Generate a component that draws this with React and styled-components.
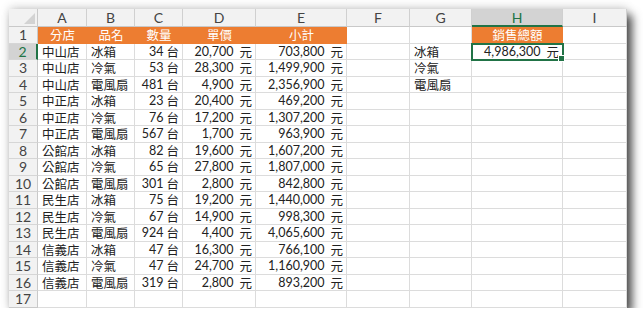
import React from 'react';
import styled, { createGlobalStyle } from 'styled-components';

const GlobalStyle = createGlobalStyle`
    html, body{
        margin: 0;
        padding: 0;
        background: #fff;
    }
    body{
        font-family: Lato, "Noto Sans CJK TC", sans-serif;
    }
`

const GREEN = '#217346';
const ORANGE = '#ED7D31';

const columns = [
    { key: 'A', width: 49 },
    { key: 'B', width: 48 },
    { key: 'C', width: 48 },
    { key: 'D', width: 73 },
    { key: 'E', width: 91 },
    { key: 'F', width: 63 },
    { key: 'G', width: 62 },
    { key: 'H', width: 91 },
    { key: 'I', width: 64 },
];

const sales = [
    ['中山店', '冰箱', 34, 20700, 703800],
    ['中山店', '冷氣', 53, 28300, 1499900],
    ['中山店', '電風扇', 481, 4900, 2356900],
    ['中正店', '冰箱', 23, 20400, 469200],
    ['中正店', '冷氣', 76, 17200, 1307200],
    ['中正店', '電風扇', 567, 1700, 963900],
    ['公館店', '冰箱', 82, 19600, 1607200],
    ['公館店', '冷氣', 65, 27800, 1807000],
    ['公館店', '電風扇', 301, 2800, 842800],
    ['民生店', '冰箱', 75, 19200, 1440000],
    ['民生店', '冷氣', 67, 14900, 998300],
    ['民生店', '電風扇', 924, 4400, 4065600],
    ['信義店', '冰箱', 47, 16300, 766100],
    ['信義店', '冷氣', 47, 24700, 1160900],
    ['信義店', '電風扇', 319, 2800, 893200],
];

const lookup = ['冰箱', '冷氣', '電風扇'];

const fmt = (n) => n.toLocaleString('en-US');

function Unit({ value, unit, wide }) {
    return (
        <>
            <span>{fmt(value)}</span>
            <UnitMark wide={wide}>{unit}</UnitMark>
        </>
    )
}

function App() {
    const header = ['分店', '品名', '數量', '單價', '小計'];

    const rows = [];
    // row 1 - titles
    rows.push(
        <React.Fragment key="r1">
            <RowHead>1</RowHead>
            {header.map((h) => <Cell key={h} fill="orange" align="center">{h}</Cell>)}
            <Cell />
            <Cell />
            <Cell fill="orange" align="center">銷售總額</Cell>
            <Cell />
        </React.Fragment>
    );

    sales.forEach((s, i) => {
        const r = i + 2;
        const selected = r === 2;
        rows.push(
            <React.Fragment key={r}>
                <RowHead selected={selected}>{r}</RowHead>
                <Cell>{s[0]}</Cell>
                <Cell>{s[1]}</Cell>
                <Cell align="right"><Unit value={s[2]} unit="台" /></Cell>
                <Cell align="right"><Unit value={s[3]} unit="元" wide /></Cell>
                <Cell align="right"><Unit value={s[4]} unit="元" wide /></Cell>
                <Cell />
                <Cell>{lookup[i] || ''}</Cell>
                {selected ? (
                    <Cell align="right" active>
                        <Unit value={4986300} unit="元" wide />
                        <Handle />
                    </Cell>
                ) : <Cell />}
                <Cell />
            </React.Fragment>
        );
    });

    rows.push(
        <React.Fragment key="r17">
            <RowHead last>17</RowHead>
            {columns.map((c) => <Cell key={c.key} last />)}
        </React.Fragment>
    );

    return (
        <>
            <GlobalStyle />
            <Frame>
                <Sheet cols={columns.map((c) => c.width + 'px').join(' ')}>
                    <Corner><Triangle /></Corner>
                    {columns.map((c) => (
                        <ColHead key={c.key} selected={c.key === 'H'}>{c.key}</ColHead>
                    ))}
                    {rows}
                </Sheet>
            </Frame>
        </>
    )
}

export default App;


const Frame = styled.div`
    padding: 9px 0 0 9px;
`
const Sheet = styled.div`
    display: grid;
    grid-template-columns: 29px ${p => p.cols};
    grid-template-rows: 18px;
    grid-auto-rows: 16.5px;
    width: 618px;
    background: #fff;
    box-shadow: 5px 6px 9px rgba(0, 0, 0, 0.7), 0 -2px 9px rgba(0, 0, 0, 0.15);
    font-size: 12.5px;
    color: #222;
`
const Corner = styled.div`
    position: relative;
    background: #f2f2f2;
    border-right: 1px solid #c9c9c9;
    border-bottom: 1px solid #c9c9c9;
`
const Triangle = styled.div`
    position: absolute;
    right: 2px;
    bottom: 2px;
    width: 0;
    height: 0;
    border-left: 11px solid transparent;
    border-bottom: 11px solid #d3d3d3;
`
const ColHead = styled.div`
    display: flex;
    align-items: center;
    justify-content: center;
    font-size: 14px;
    background: ${p => p.selected ? '#d3d3d3' : '#f2f2f2'};
    color: ${p => p.selected ? GREEN : '#444'};
    border-right: 1px solid #d0d0d0;
    border-bottom: ${p => p.selected ? `2px solid ${GREEN}` : '1px solid #c9c9c9'};
    box-sizing: border-box;
`
const RowHead = styled.div`
    display: flex;
    align-items: center;
    justify-content: center;
    font-size: 14px;
    background: ${p => p.selected ? '#d3d3d3' : '#f2f2f2'};
    color: ${p => p.selected ? GREEN : '#444'};
    border-right: ${p => p.selected ? `2px solid ${GREEN}` : '1px solid #c9c9c9'};
    border-bottom: 1px solid ${p => p.last ? '#c9c9c9' : '#d6d6d6'};
    box-sizing: border-box;
`
const Cell = styled.div`
    position: relative;
    display: flex;
    align-items: center;
    justify-content: ${p => p.align === 'right' ? 'flex-end' : p.align === 'center' ? 'center' : 'flex-start'};
    padding: 0 3px 0 4px;
    white-space: nowrap;
    box-sizing: border-box;
    background: ${p => p.fill === 'orange' ? ORANGE : '#fff'};
    color: ${p => p.fill === 'orange' ? '#fff' : '#222'};
    border-right: 1px solid ${p => p.fill === 'orange' ? ORANGE : '#dcdcdc'};
    border-bottom: 1px solid ${p => p.fill === 'orange' ? ORANGE : '#dcdcdc'};
    ${p => p.active && `
        outline: 2px solid ${GREEN};
        outline-offset: -1px;
        z-index: 1;
    `}
`
const UnitMark = styled.span`
    margin-left: ${p => p.wide ? '6px' : '3px'};
`
const Handle = styled.span`
    position: absolute;
    right: -3px;
    bottom: -3px;
    width: 5px;
    height: 5px;
    background: ${GREEN};
    border: 1px solid #fff;
`
